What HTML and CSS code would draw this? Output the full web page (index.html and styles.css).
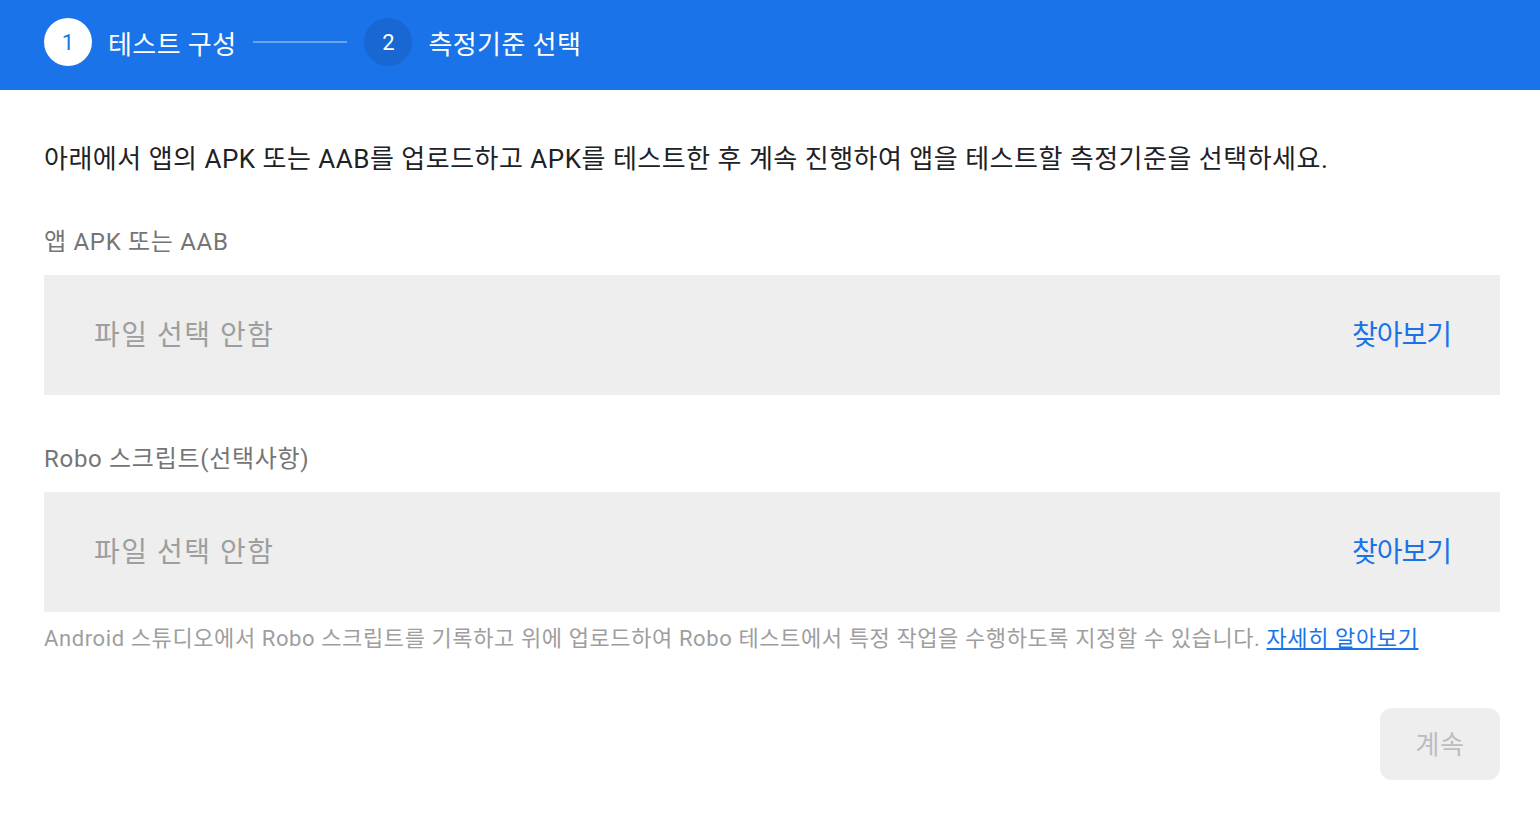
FILE: index.html
```html
<!DOCTYPE html>
<html lang="ko">
<head>
<meta charset="utf-8">
<title>테스트 구성</title>
<link rel="stylesheet" href="styles.css">
</head>
<body>

<div class="stepper">
	<div class="step">
		<span class="step-num active">1</span>
		<span class="step-label">테스트 구성</span>
	</div>
	<span class="step-line"></span>
	<div class="step">
		<span class="step-num">2</span>
		<span class="step-label">측정기준 선택</span>
	</div>
</div>

<div class="content">
	<p class="intro">아래에서 앱의 APK 또는 AAB를 업로드하고 APK를 테스트한 후 계속 진행하여 앱을 테스트할 측정기준을 선택하세요.</p>

	<div class="field">
		<div class="field-label">앱 APK 또는 AAB</div>
		<div class="file-box">
			<span class="file-name">파일 선택 안함</span>
			<span class="browse">찾아보기</span>
		</div>
	</div>

	<div class="field">
		<div class="field-label">Robo 스크립트(선택사항)</div>
		<div class="file-box">
			<span class="file-name">파일 선택 안함</span>
			<span class="browse">찾아보기</span>
		</div>
		<div class="hint">Android 스튜디오에서 Robo 스크립트를 기록하고 위에 업로드하여 Robo 테스트에서 특정 작업을 수행하도록 지정할 수 있습니다. <a href="#">자세히 알아보기</a></div>
	</div>

	<div class="actions">
		<button class="next" disabled>계속</button>
	</div>
</div>

</body>
</html>
```

FILE: styles.css
```css
body {
	margin: 0;
	font-family: Roboto, "Noto Sans CJK KR", sans-serif;
	background: #fff;
}
.stepper {
	display: flex;
	align-items: center;
	height: 90px;
	padding: 0 44px 6px;
	background: #1a73e8;
	box-sizing: border-box;
}
.step {
	display: flex;
	align-items: center;
}
.step-num {
	display: flex;
	align-items: center;
	justify-content: center;
	width: 48px;
	height: 48px;
	border-radius: 50%;
	background: #1967d2;
	color: #fff;
	font-size: 22px;
}
.step-num.active {
	background: #fff;
	color: #1a73e8;
}
.step-label {
	margin-left: 16px;
	color: #fff;
	font-size: 26px;
	letter-spacing: 0.4px;
}
.step-line {
	width: 94px;
	height: 2px;
	margin: 0 17px 0 17px;
	background: rgba(255, 255, 255, 0.35);
}
.content {
	padding: 0 40px 0 44px;
}
.intro {
	margin: 53px 0 0;
	font-size: 26px;
	line-height: 32px;
	color: #202124;
	letter-spacing: 0.5px;
}
.field {
	margin-top: 52px;
}
.field + .field {
	margin-top: 49px;
}
.field-label {
	font-size: 24px;
	line-height: 30px;
	color: #757575;
	letter-spacing: 0.7px;
}
.file-box {
	display: flex;
	align-items: center;
	justify-content: space-between;
	height: 120px;
	margin-top: 18px;
	padding: 0 49px 0 50px;
	background: #eeeeee;
}
.file-name {
	font-size: 28px;
	color: #9e9e9e;
	letter-spacing: 1.5px;
	margin-top: -4px;
}
.browse {
	font-size: 28px;
	color: #1a73e8;
	letter-spacing: -1px;
	margin-top: -4px;
}
.hint {
	margin-top: 12px;
	font-size: 22px;
	line-height: 30px;
	color: #9e9e9e;
	letter-spacing: 0.6px;
}
.hint a {
	color: #1a73e8;
}
.actions {
	display: flex;
	justify-content: flex-end;
	margin-top: 54px;
}
.next {
	width: 120px;
	height: 72px;
	padding: 0 0 4px;
	border: none;
	border-radius: 12px;
	background: #eeeeee;
	color: #bdbdbd;
	font-family: inherit;
	font-size: 26px;
	letter-spacing: 0.5px;
}
```
